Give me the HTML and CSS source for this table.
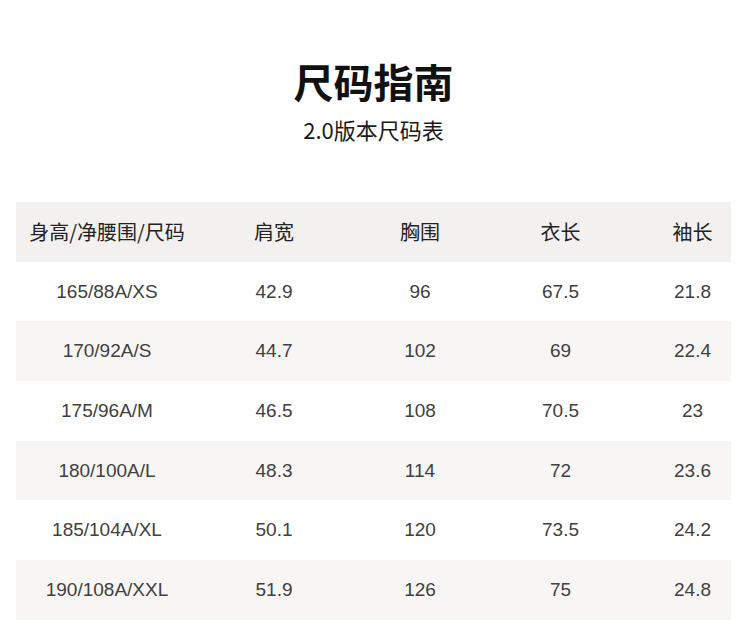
FILE: index.html
```html
<!DOCTYPE html>
<html lang="zh-CN">
<head>
<meta charset="utf-8">
<title>尺码指南</title>
<link rel="stylesheet" href="styles.css">
</head>
<body>
<div class="page">
  <h1 class="title">尺码指南</h1>
  <p class="subtitle">2.0版本尺码表</p>
  <div class="table">
    <div class="row head">
      <div class="cell">身高/净腰围/尺码</div>
      <div class="cell">肩宽</div>
      <div class="cell">胸围</div>
      <div class="cell">衣长</div>
      <div class="cell last">袖长</div>
    </div>
    <div class="row">
      <div class="cell">165/88A/XS</div>
      <div class="cell">42.9</div>
      <div class="cell">96</div>
      <div class="cell">67.5</div>
      <div class="cell last">21.8</div>
    </div>
    <div class="row alt">
      <div class="cell">170/92A/S</div>
      <div class="cell">44.7</div>
      <div class="cell">102</div>
      <div class="cell">69</div>
      <div class="cell last">22.4</div>
    </div>
    <div class="row">
      <div class="cell">175/96A/M</div>
      <div class="cell">46.5</div>
      <div class="cell">108</div>
      <div class="cell">70.5</div>
      <div class="cell last">23</div>
    </div>
    <div class="row alt">
      <div class="cell">180/100A/L</div>
      <div class="cell">48.3</div>
      <div class="cell">114</div>
      <div class="cell">72</div>
      <div class="cell last">23.6</div>
    </div>
    <div class="row">
      <div class="cell">185/104A/XL</div>
      <div class="cell">50.1</div>
      <div class="cell">120</div>
      <div class="cell">73.5</div>
      <div class="cell last">24.2</div>
    </div>
    <div class="row alt">
      <div class="cell">190/108A/XXL</div>
      <div class="cell">51.9</div>
      <div class="cell">126</div>
      <div class="cell">75</div>
      <div class="cell last">24.8</div>
    </div>
  </div>
</div>
</body>
</html>
```

FILE: styles.css
```css
html, body {
  margin: 0;
  padding: 0;
  background: #ffffff;
}

.page {
  padding: 58px 19px 0 16px;
  font-family: "Noto Sans CJK SC", "Noto Sans", sans-serif;
  color: #1a1a1a;
}

.title {
  margin: 0;
  text-align: center;
  font-size: 40px;
  line-height: 46px;
  font-weight: 700;
  color: #111111;
}

.subtitle {
  margin: 10px 0 0;
  text-align: center;
  font-size: 22px;
  line-height: 30px;
  font-weight: 400;
  color: #1a1a1a;
}

.table {
  margin-top: 58px;
  display: flex;
  flex-direction: column;
}

.row {
  display: grid;
  grid-template-columns: 182px 152px 140px 141px 1fr;
  align-items: center;
  height: 59.7px;
  font-family: "Liberation Sans", "Noto Sans CJK SC", sans-serif;
  font-size: 19px;
  color: #404040;
}

.row.head {
  background: #f2f1f0;
  font-family: "Noto Sans CJK SC", sans-serif;
  font-size: 20px;
  color: #222222;
}

.row.alt {
  background: #f7f6f4;
}

.cell {
  text-align: center;
  white-space: nowrap;
}

.cell.last {
  padding-left: 23px;
}
```
